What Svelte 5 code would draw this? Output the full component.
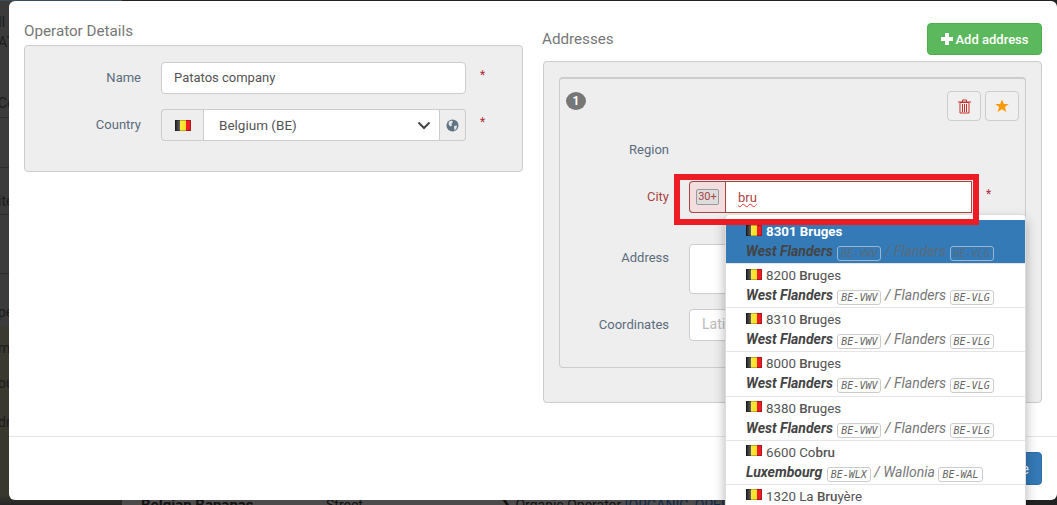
<script lang="ts">
  type Hit = { zip: string; pre: string; hit: string; post: string; province: string; pcode: string; region: string; rcode: string };

  const vwv = { province: 'West Flanders', pcode: 'BE-VWV', region: 'Flanders', rcode: 'BE-VLG' };
  const wlx = { province: 'Luxembourg', pcode: 'BE-WLX', region: 'Wallonia', rcode: 'BE-WAL' };

  const hits: Hit[] = [
    { zip: '8301', pre: '', hit: 'Bru', post: 'ges', ...vwv },
    { zip: '8200', pre: '', hit: 'Bru', post: 'ges', ...vwv },
    { zip: '8310', pre: '', hit: 'Bru', post: 'ges', ...vwv },
    { zip: '8000', pre: '', hit: 'Bru', post: 'ges', ...vwv },
    { zip: '8380', pre: '', hit: 'Bru', post: 'ges', ...vwv },
    { zip: '6600', pre: 'Co', hit: 'bru', post: '', ...wlx },
    { zip: '1320', pre: 'La ', hit: 'Bru', post: 'yère', ...wlx }
  ];

  // what shows of the page behind the modal, down the left edge
  const behind = [
    { h: 14, text: '' },
    { h: 16, text: 'Il' },
    { h: 24, text: 'ATC' },
    { h: 38, text: '' },
    { h: 22, text: 'Co' },
    { h: 3, text: '' },
    { h: 50, text: '', line: true },
    { h: 20, text: '', line: true },
    { h: 27, text: 'ite' },
    { h: 59, text: '', line: true },
    { h: 24, text: '', line: true },
    { h: 30, text: 'pe' },
    { h: 8, text: '' },
    { h: 26, text: 'mi' },
    { h: 9, text: '' },
    { h: 26, text: 'ou' },
    { h: 13, text: '' },
    { h: 26, text: 'dr' }
  ];
</script>

<div class="page">
  <div class="behind">
    {#each behind as row}
      <div class="behind-row" class:line={row.line} style="height: {row.h}px">{row.text}</div>
    {/each}
  </div>
  <div class="behind-table">
    <b>Belgian Bananas</b>
    <span class="street">Street</span>
    <span class="organic">❯ Organic Operator <a href="#top">[ORGANIC_OPERATOR]</a></span>
  </div>

  <div class="modal">
    <div class="modal-body">
      <section class="col">
        <h4 class="left-head">Operator Details</h4>
        <div class="panel operator">
          <div class="row">
            <label for="op-name">Name</label>
            <input id="op-name" class="control" value="Patatos company" />
            <span class="req">*</span>
          </div>
          <div class="row">
            <span class="label">Country</span>
            <div class="group">
              <span class="addon flag-addon"><i class="flag"></i></span>
              <div class="select">
                Belgium (BE)
                <svg width="14" height="9" viewBox="0 0 14 9"><path d="M1.5 1.5 7 7l5.500-5.500" fill="none" stroke="#444" stroke-width="2" /></svg>
              </div>
              <span class="addon globe">
                <svg width="13" height="13" viewBox="0 0 13 13">
                  <circle cx="6.500" cy="6.500" r="6" fill="#5f7382" />
                  <path d="M3 2.500 6 1.500l1 1.500-1.500 1.500.5 2-2 1-1.500-2.500zM8 7l3-.5-.5 3L8.500 11.500z" fill="#e4e7e9" />
                </svg>
              </span>
            </div>
            <span class="req">*</span>
          </div>
        </div>
      </section>

      <section class="col">
        <div class="right-head">
          <h4>Addresses</h4>
          <button class="add">
            <svg width="12" height="12" viewBox="0 0 12 12"><path d="M4 0h4v4h4v4H8v4H4V8H0V4h4z" fill="#fff" /></svg>
            Add address
          </button>
        </div>
        <div class="panel addresses">
          <div class="panel address">
            <div class="address-top">
              <span class="badge">1</span>
              <div class="tools">
                <button class="tool" aria-label="Delete">
                  <svg width="13" height="15" viewBox="0 0 13 15" fill="none" stroke="#c9302c">
                    <path d="M0 3h13M4.500 3V1h4v2" />
                    <path d="M2 3.500h9V14H2z" />
                    <path d="M4.500 5v8M6.500 5v8M8.500 5v8" />
                  </svg>
                </button>
                <button class="tool" aria-label="Favourite">
                  <svg width="14" height="14" viewBox="0 0 14 14"><path d="M7 .5 8.900 5h4.800L9.900 8l1.400 5L7 10.200 2.700 13l1.400-5L.3 5h4.800z" fill="#f90" /></svg>
                </button>
              </div>
            </div>

            <div class="row region"><span class="label">Region</span></div>

            <div class="row error">
              <span class="label">City</span>
              <div class="group">
                <span class="addon count-addon"><kbd>30+</kbd></span>
                <div class="typed"><span>bru</span></div>
              </div>
              <span class="req">*</span>
            </div>

            <div class="row top">
              <span class="label">Address</span>
              <div class="control area"></div>
            </div>

            <div class="row">
              <span class="label">Coordinates</span>
              <input class="control" placeholder="Latitude" />
            </div>
          </div>
        </div>
      </section>
    </div>

    <div class="modal-foot">
      <button class="save">Save</button>
    </div>
  </div>

  <ul class="menu">
    {#each hits as item, i}
      <li class:active={i === 0}>
        <div class="place">
          <i class="flag"></i>
          <span>{item.zip} {item.pre}<b>{item.hit}</b>{item.post}</span>
        </div>
        <div class="area-line">
          <b>{item.province}</b> <code class="first">{item.pcode}</code> / {item.region} <code>{item.rcode}</code>
        </div>
      </li>
    {/each}
  </ul>

  <div class="callout"></div>
</div>

<style>
  :global(body) {
    margin: 0;
    font-family: Roboto, 'Liberation Sans', sans-serif;
    font-size: 13px;
    color: #555;
  }
  .page {
    position: relative;
    width: 1057px;
    height: 505px;
    overflow: hidden;
    background: #222;
  }
  .behind {
    position: absolute;
    inset: 0 auto 0 0;
    width: 122px;
    font-size: 14px;
    color: #1c1c1c;
    background: linear-gradient(#3c4d5c 1px, #3b3b3b 1px, #3b3b3b 326px, #3b3a30 327px, #38382e 495px, #262626);
  }
  .behind-row {
    display: flex;
    align-items: center;
    box-sizing: border-box;
    overflow: hidden;
    margin-left: -2px;
  }
  .behind-row.line {
    border-top: 1px solid #2c2c2c;
  }
  .behind-table {
    position: absolute;
    left: 122px;
    right: 32px;
    top: 497px;
    height: 8px;
    overflow: hidden;
    background: #4c4c4c;
    color: #111;
    font-size: 14px;
    white-space: nowrap;
    line-height: 16px;
  }
  .behind-table b {
    position: absolute;
    left: 19px;
    font-size: 15px;
  }
  .street {
    position: absolute;
    left: 204px;
  }
  .organic {
    position: absolute;
    left: 378px;
  }
  .organic a {
    color: #10294a;
    text-decoration: none;
  }

  .modal {
    position: relative;
    box-sizing: border-box;
    width: 1048px;
    height: 499px;
    margin: 0 0 0 9px;
    top: 1px;
    display: flex;
    flex-direction: column;
    background: #fff;
    border-radius: 6px;
  }
  .modal-body {
    box-sizing: border-box;
    height: 435px;
    padding: 22px 15px 0;
    display: grid;
    grid-template-columns: 499px 499px;
    gap: 20px;
    align-items: start;
  }
  .modal-foot {
    flex: 1;
    border-top: 1px solid #e5e5e5;
    padding: 15px 15px 0;
    display: flex;
    justify-content: flex-end;
    align-items: flex-start;
  }
  h4 {
    margin: 0;
    font-size: 15.2px;
    font-weight: 400;
    color: #777;
  }
  .left-head {
    height: 22px;
    line-height: 16px;
  }
  .right-head {
    display: flex;
    justify-content: space-between;
    align-items: center;
    margin-bottom: 6px;
    margin-left: -1px;
  }
  .panel {
    box-sizing: border-box;
    background: #eee;
    border: 1px solid #ccc;
    border-radius: 4px;
  }
  .operator {
    height: 127px;
    padding: 16px 0 0;
    display: flex;
    flex-direction: column;
    gap: 15px;
  }
  .addresses {
    height: 342px;
    padding: 15px;
  }
  .address {
    height: 291px;
    padding: 12px 6px 0;
    border-width: 2px 1px 1px;
    display: flex;
    flex-direction: column;
    gap: 15px;
  }
  .row {
    display: grid;
    grid-template-columns: 116px 305px auto;
    column-gap: 20px;
    align-items: center;
  }
  .address .row {
    grid-template-columns: 103px 283px auto;
    column-gap: 20px;
  }
  .row.top {
    align-items: start;
    margin-top: 16px;
  }
  .row.top .label {
    padding: 6px 0 0;
  }
  .row.region {
    height: 32px;
    margin-top: -2px;
  }
  label,
  .label {
    text-align: right;
    color: #5a6c7d;
    padding-bottom: 2px;
  }
  .req {
    color: #b02a37;
    font-size: 12px;
    margin-left: -6px;
    margin-top: -7px;
  }
  .control {
    box-sizing: border-box;
    width: 100%;
    height: 32px;
    padding: 0 12px 1px;
    border: 1px solid #ccc;
    border-radius: 4px;
    background: #fff;
    font: inherit;
    color: #555;
    outline: none;
  }
  .control::placeholder {
    color: #bbb;
    font-size: 14px;
  }
  .area {
    height: 50px;
  }
  .group {
    display: flex;
    height: 32px;
    box-sizing: border-box;
  }
  .addon {
    box-sizing: border-box;
    display: flex;
    align-items: center;
    justify-content: center;
    background: #eee;
    border: 1px solid #ccc;
  }
  .flag-addon {
    width: 42px;
    border-radius: 4px 0 0 4px;
    border-right: 0;
  }
  .select {
    flex: 1;
    display: flex;
    align-items: center;
    justify-content: space-between;
    padding: 0 8px 0 15px;
    background: #fff;
    border: 1px solid #ccc;
    font-size: 13.5px;
  }
  .globe {
    width: 26px;
    border-left: 0;
    border-radius: 0 4px 4px 0;
  }
  .flag {
    display: inline-block;
    width: 16px;
    height: 11px;
    background: linear-gradient(90deg, #1c1c1c, #666 33%, #fde93a 33%, #f8e028 66%, #ee1c25 66%, #ee1c25);
    box-shadow: inset 0 0 0 1px rgba(0, 0, 0, 0.25);
  }

  .add {
    box-sizing: border-box;
    height: 32px;
    width: 115px;
    padding: 0;
    display: flex;
    align-items: center;
    justify-content: center;
    gap: 3px;
    background: #5cb85c;
    border: 1px solid #4cae4c;
    border-radius: 4px;
    color: #fff;
    font: 500 13px Roboto, sans-serif;
  }
  .address-top {
    display: flex;
    justify-content: space-between;
    height: 30px;
    align-items: flex-start;
  }
  .badge {
    width: 20px;
    height: 18px;
    margin-top: 1px;
    border-radius: 50%;
    background: #777;
    color: #fff;
    font-size: 12px;
    font-weight: 700;
    text-align: center;
    line-height: 18px;
  }
  .tools {
    display: flex;
    gap: 4px;
  }
  .tool {
    box-sizing: border-box;
    width: 34px;
    height: 30px;
    padding: 0;
    display: flex;
    align-items: center;
    justify-content: center;
    background: #f0f0f0;
    border: 1px solid #ccc;
    border-radius: 4px;
  }

  .error .label {
    color: #a94442;
  }
  .count-addon {
    width: 36px;
    background: #f2dede;
    border: 1px solid #a94442;
    border-right: 0;
    border-radius: 4px 0 0 4px;
  }
  kbd {
    box-sizing: border-box;
    width: 23px;
    height: 16px;
    background: #ddd;
    border: 1px solid #999;
    border-radius: 2px;
    color: #a94442;
    font: 11px/14px Roboto, sans-serif;
    text-align: center;
  }
  .typed {
    flex: 1;
    display: flex;
    align-items: center;
    padding-left: 12px;
    background: #fff;
    border: 1px solid #a94442;
    color: #a94442;
  }
  .typed span {
    text-decoration: underline wavy #e33 1px;
  }

  .save {
    box-sizing: border-box;
    width: 70px;
    height: 33px;
    padding: 0 12px;
    background: #337ab7;
    border: 1px solid #2e6da4;
    border-radius: 4px;
    color: #fff;
    font: 14px Roboto, sans-serif;
    text-align: right;
  }

  .menu {
    position: absolute;
    left: 725px;
    top: 214px;
    box-sizing: border-box;
    width: 301px;
    margin: 0;
    padding: 5px 0 0;
    height: 291px;
    overflow: hidden;
    list-style: none;
    background: #fff;
    border: 1px solid #ddd;
    border-bottom: 0;
    border-radius: 4px 4px 0 0;
    box-shadow: 0 6px 12px rgba(0, 0, 0, 0.3);
  }
  .menu li {
    box-sizing: border-box;
    height: 44.17px;
    padding: 2px 20px 0;
    border-bottom: 1px solid #e5e5e5;
    color: #555;
    white-space: nowrap;
  }
  .place {
    display: flex;
    align-items: center;
    gap: 4px;
    height: 19px;
    line-height: 19px;
    font-size: 13.3px;
  }
  .place b {
    font-weight: 500;
  }
  .place .flag {
    margin-top: -3px;
  }
  .area-line {
    height: 20px;
    line-height: 20px;
    font-size: 14px;
    font-style: italic;
    color: #777;
  }
  .area-line b {
    font-weight: 700;
    color: #444;
  }
  code {
    display: inline-block;
    box-sizing: border-box;
    height: 15px;
    padding: 0 3px;
    border: 1px solid #ccc;
    border-radius: 3px;
    font: italic 10px/13px 'DejaVu Sans Mono', monospace;
    color: #666;
    vertical-align: -1px;
  }
  code.first {
    margin-left: 1px;
  }
  .menu li.active {
    background: #337ab7;
  }
  .active .place {
    color: #fff;
  }
  .active .place b,
  .active .place span {
    font-weight: 700;
  }
  .active .area-line {
    color: #5b6b7a;
  }
  .active code {
    color: #5b6b7a;
    border-color: #9ab6cf;
  }

  .callout {
    position: absolute;
    left: 674px;
    top: 174px;
    box-sizing: border-box;
    width: 305px;
    height: 51px;
    border: 6px solid #ed1c24;
  }
</style>
